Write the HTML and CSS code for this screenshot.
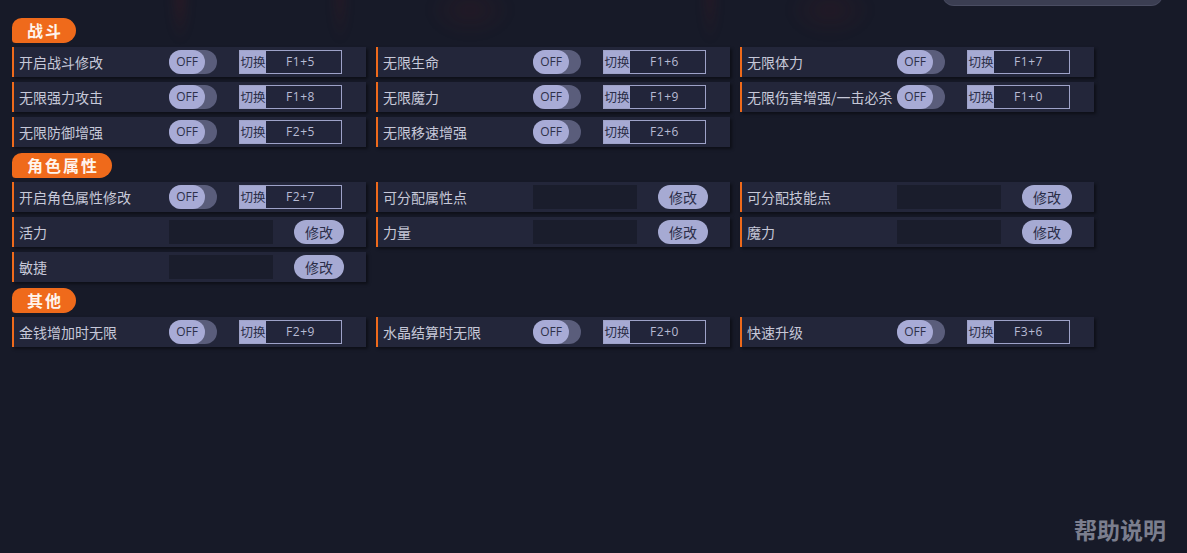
FILE: index.html
```html
<!DOCTYPE html>
<html lang="zh-CN">
<head>
<meta charset="utf-8">
<title>修改器</title>
<link rel="stylesheet" href="styles.css">
</head>
<body>
<div class="deco"></div>
<div class="search"></div>
<main class="page">
  <div class="sec-title">战斗</div>
  <div class="grid">
    <div class="row"><span class="label">开启战斗修改</span><span class="toggle"><span class="knob">OFF</span></span><span class="key"><span class="key-tag">切换</span><span class="key-val">F1+5</span></span></div>
    <div class="row"><span class="label">无限生命</span><span class="toggle"><span class="knob">OFF</span></span><span class="key"><span class="key-tag">切换</span><span class="key-val">F1+6</span></span></div>
    <div class="row"><span class="label">无限体力</span><span class="toggle"><span class="knob">OFF</span></span><span class="key"><span class="key-tag">切换</span><span class="key-val">F1+7</span></span></div>
    <div class="row"><span class="label">无限强力攻击</span><span class="toggle"><span class="knob">OFF</span></span><span class="key"><span class="key-tag">切换</span><span class="key-val">F1+8</span></span></div>
    <div class="row"><span class="label">无限魔力</span><span class="toggle"><span class="knob">OFF</span></span><span class="key"><span class="key-tag">切换</span><span class="key-val">F1+9</span></span></div>
    <div class="row"><span class="label">无限伤害增强/一击必杀</span><span class="toggle"><span class="knob">OFF</span></span><span class="key"><span class="key-tag">切换</span><span class="key-val">F1+0</span></span></div>
    <div class="row"><span class="label">无限防御增强</span><span class="toggle"><span class="knob">OFF</span></span><span class="key"><span class="key-tag">切换</span><span class="key-val">F2+5</span></span></div>
    <div class="row"><span class="label">无限移速增强</span><span class="toggle"><span class="knob">OFF</span></span><span class="key"><span class="key-tag">切换</span><span class="key-val">F2+6</span></span></div>
  </div>

  <div class="sec-title">角色属性</div>
  <div class="grid">
    <div class="row"><span class="label">开启角色属性修改</span><span class="toggle"><span class="knob">OFF</span></span><span class="key"><span class="key-tag">切换</span><span class="key-val">F2+7</span></span></div>
    <div class="row"><span class="label">可分配属性点</span><span class="input"></span><span class="btn">修改</span></div>
    <div class="row"><span class="label">可分配技能点</span><span class="input"></span><span class="btn">修改</span></div>
    <div class="row"><span class="label">活力</span><span class="input"></span><span class="btn">修改</span></div>
    <div class="row"><span class="label">力量</span><span class="input"></span><span class="btn">修改</span></div>
    <div class="row"><span class="label">魔力</span><span class="input"></span><span class="btn">修改</span></div>
    <div class="row"><span class="label">敏捷</span><span class="input"></span><span class="btn">修改</span></div>
  </div>

  <div class="sec-title">其他</div>
  <div class="grid">
    <div class="row"><span class="label">金钱增加时无限</span><span class="toggle"><span class="knob">OFF</span></span><span class="key"><span class="key-tag">切换</span><span class="key-val">F2+9</span></span></div>
    <div class="row"><span class="label">水晶结算时无限</span><span class="toggle"><span class="knob">OFF</span></span><span class="key"><span class="key-tag">切换</span><span class="key-val">F2+0</span></span></div>
    <div class="row"><span class="label">快速升级</span><span class="toggle"><span class="knob">OFF</span></span><span class="key"><span class="key-tag">切换</span><span class="key-val">F3+6</span></span></div>
  </div>
</main>
<div class="help">帮助说明</div>
</body>
</html>
```

FILE: styles.css
```css
html, body {
  margin: 0;
  padding: 0;
}
body {
  width: 1187px;
  height: 553px;
  overflow: hidden;
  position: relative;
  background: #171a28;
  font-family: "Noto Sans CJK SC", "Noto Sans", sans-serif;
  color: #c4c6d6;
}
.deco {
  position: absolute;
  left: 140px;
  top: -40px;
  width: 780px;
  height: 90px;
  background:
    radial-gradient(ellipse 14px 60px at 40px 40px, rgba(90, 25, 28, 0.28), transparent 70%),
    radial-gradient(ellipse 12px 60px at 200px 40px, rgba(90, 25, 28, 0.22), transparent 70%),
    radial-gradient(ellipse 60px 40px at 330px 50px, rgba(90, 25, 28, 0.16), transparent 70%),
    radial-gradient(ellipse 12px 60px at 570px 40px, rgba(90, 25, 28, 0.22), transparent 70%),
    radial-gradient(ellipse 60px 40px at 690px 50px, rgba(90, 25, 28, 0.16), transparent 70%);
  filter: blur(4px);
}
.search {
  position: absolute;
  left: 942px;
  top: -20px;
  width: 221px;
  height: 25px;
  border-radius: 12px;
  background: #3b3e52;
  box-shadow: 0 1px 0 #4a4d62;
}
.page {
  position: relative;
  padding: 18px 0 0 12px;
}
.sec-title {
  display: inline-block;
  height: 25px;
  line-height: 25px;
  padding: 0 13px 0 15px;
  background: #ef6a1b;
  color: #fff4ec;
  font-weight: 700;
  font-size: 16px;
  letter-spacing: 2px;
  border-radius: 10px 13px 13px 4px;
  margin-bottom: 4px;
}
.grid {
  display: grid;
  grid-template-columns: repeat(3, 354px);
  column-gap: 10px;
  row-gap: 5px;
  margin-bottom: 6px;
}
.row {
  display: flex;
  align-items: center;
  height: 30px;
  background: #23263a;
  border-left: 2px solid #ef6a1b;
  box-shadow: 2px 2px 3px rgba(0, 0, 0, 0.45);
  box-sizing: border-box;
}
.label {
  width: 155px;
  padding-left: 5px;
  box-sizing: border-box;
  font-size: 14px;
  color: #c6c8d8;
  white-space: nowrap;
  overflow: visible;
}
.toggle {
  width: 48px;
  height: 24px;
  border-radius: 12px;
  background: #5a5d7b;
  display: flex;
}
.knob {
  width: 36px;
  height: 24px;
  border-radius: 12px;
  background: #a8abd6;
  color: #2d3049;
  font-family: "Open Sans", "Liberation Sans", sans-serif;
  font-size: 12px;
  line-height: 24px;
  text-align: center;
}
.key {
  margin-left: 22px;
  width: 103px;
  height: 24px;
  display: flex;
  box-sizing: border-box;
  border: 1px solid #9ea2c8;
  background: #22253a;
}
.key-tag {
  width: 26px;
  background: #a6aad3;
  color: #2b2e48;
  font-size: 12.5px;
  line-height: 22px;
  text-align: center;
  white-space: nowrap;
  overflow: hidden;
}
.key-val {
  flex: 1;
  text-align: center;
  color: #b8bbd4;
  font-family: "Open Sans", "Liberation Sans", sans-serif;
  font-size: 12px;
  letter-spacing: 0.5px;
  line-height: 22px;
  padding-right: 6px;
}
.input {
  width: 104px;
  height: 24px;
  background: #1a1d2c;
}
.btn {
  margin-left: 21px;
  width: 50px;
  height: 24px;
  border-radius: 12px;
  background: #a6aad3;
  color: #2b2e48;
  font-size: 14px;
  line-height: 24px;
  text-align: center;
}
.help {
  position: absolute;
  right: 21px;
  bottom: 7px;
  font-size: 23px;
  font-weight: 700;
  color: #7b7e8e;
  letter-spacing: 0;
}
```
